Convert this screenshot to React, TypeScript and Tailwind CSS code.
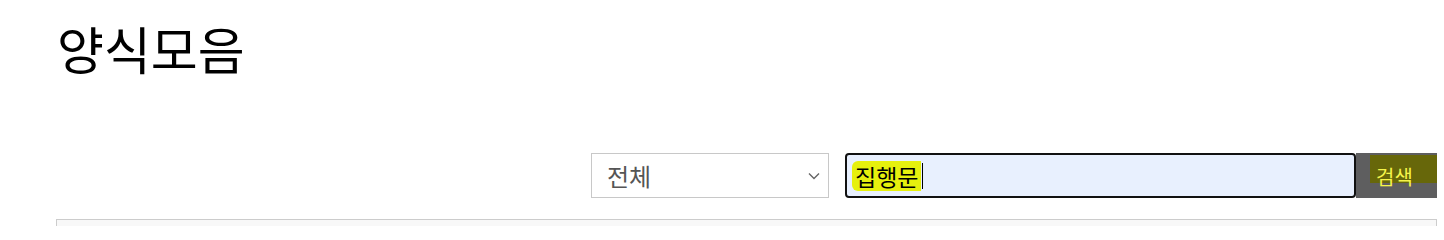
import React from "react";

export default function App() {
  return (
    <div
      className="w-[1444px] h-[226px] bg-white overflow-hidden pl-[56px] pr-[7px]"
      style={{ fontFamily: '"Noto Sans CJK KR", "Noto Sans", sans-serif' }}
    >
      <h1 className="pt-[16px] pl-[1px] text-[51px] leading-[64px] font-normal text-black">
        양식모음
      </h1>
      <div className="mt-[73px] flex justify-end items-stretch h-[45px]">
        <div className="w-[238px] h-[45px] border border-[#c8c8c8] bg-white flex items-center justify-between pl-[15px] pr-[8px]">
          <span className="text-[24px] text-[#555555] leading-none">전체</span>
          <svg width="12" height="8" viewBox="0 0 12 8" fill="none">
            <path d="M1 1.5L6 6.5L11 1.5" stroke="#666" strokeWidth="1.4" />
          </svg>
        </div>
        <div className="ml-[16px] w-[511px] h-[45px] border-2 border-[#111] rounded-[4px] bg-[#e8f0fe] flex items-center pl-[5px]">
          <span className="bg-[#e6f00e] text-[23px] leading-[30px] text-black px-[3px] rounded-l-[6px]">
            집행문
          </span>
          <span className="w-[1px] h-[26px] bg-black ml-[1px]" />
        </div>
        <button className="w-[81px] h-[45px] bg-[#5e5e5f] flex items-start pt-[2px] pl-[14px]">
          <span className="flex-1 h-[28px] bg-[#67670a] flex items-end pl-[6px] text-[20px] leading-[22px] text-[#f5f54a]">
            <span className="translate-y-[5px]">검색</span>
          </span>
        </button>
      </div>
      <div className="mt-[21px] h-[40px] border border-[#cccccc] bg-[#f8f8f8]" />
    </div>
  );
}
